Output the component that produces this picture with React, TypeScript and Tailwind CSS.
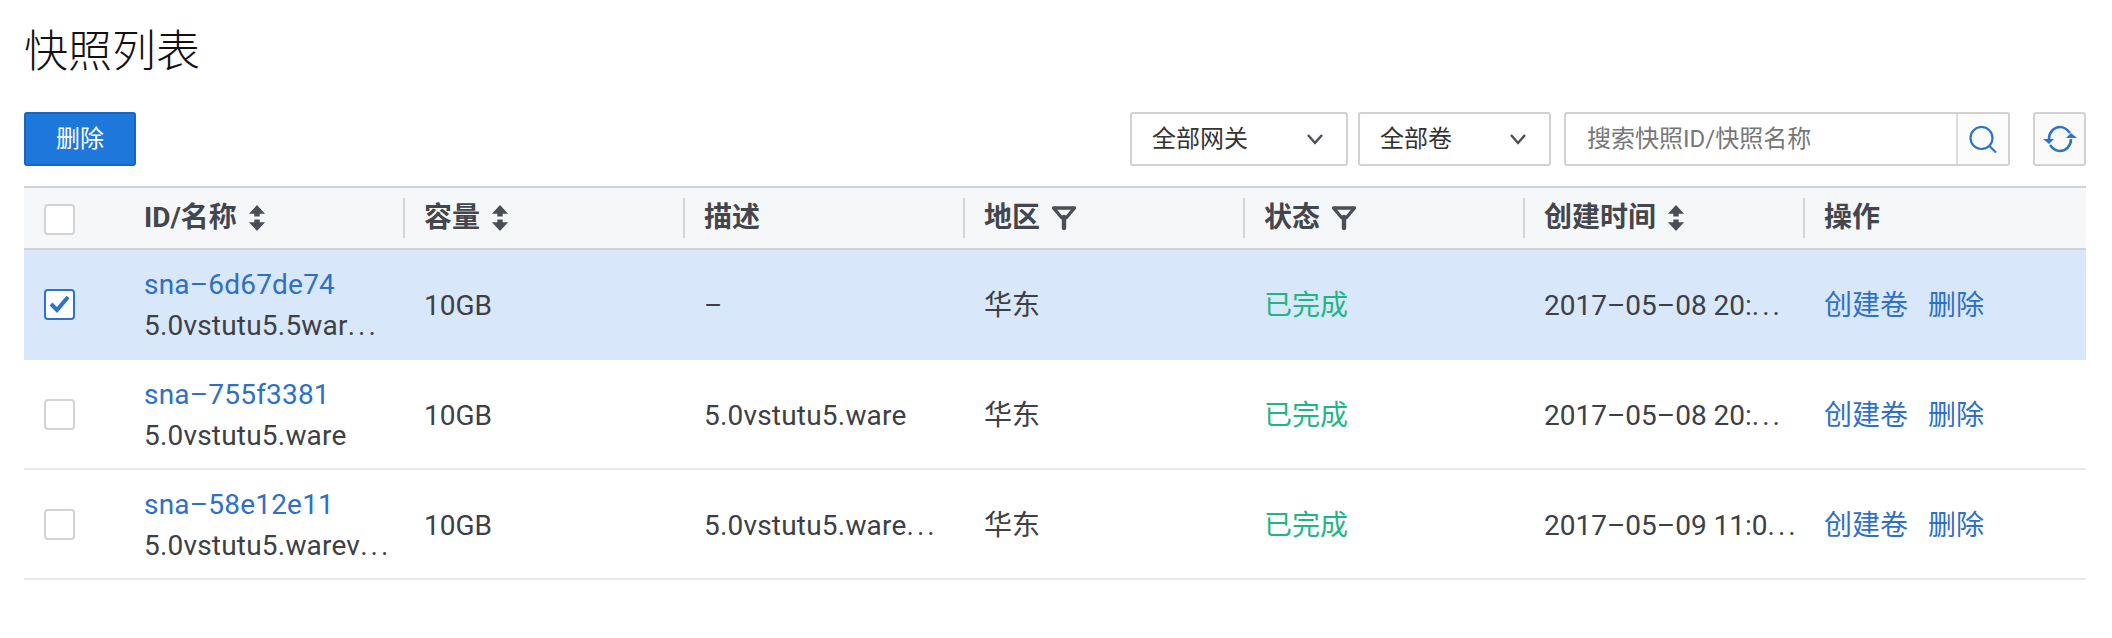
const FONT = "font-['Roboto','Noto_Sans_CJK_SC',sans-serif]";

function SortIcon() {
  return (
    <svg width="18" height="28" viewBox="0 0 16 26" className="ml-[11px] shrink-0" fill="#4a4e55">
      <path d="M8 1 L15.5 9 H10.5 V11.5 H5.5 V9 H0.5 Z" />
      <path d="M8 25 L15.5 17 H10.5 V14.5 H5.5 V17 H0.5 Z" />
    </svg>
  );
}

function FilterIcon() {
  return (
    <svg width="26" height="26" viewBox="0 0 26 26" className="ml-[11px] shrink-0" fill="none" stroke="#4a4e55">
      <path d="M2.5 3 H23.5 L15.5 12.5 H10.5 Z" strokeWidth="3.4" strokeLinejoin="round" />
      <path d="M13 12 V23" strokeWidth="4.4" strokeLinecap="round" />
    </svg>
  );
}

function Chevron() {
  return (
    <svg width="18" height="12" viewBox="0 0 18 12" fill="none" stroke="#4a4e55" strokeWidth="2.4">
      <path d="M2 2 L9 10 L16 2" />
    </svg>
  );
}

function Checkbox({ checked }: { checked?: boolean }) {
  return (
    <div className={`flex h-[31px] w-[31px] items-center justify-center rounded-[4px] border-2 bg-white ${checked ? "border-[#2c74c9]" : "border-[#d3d3d3]"}`}>
      {checked && (
        <svg width="22" height="20" viewBox="0 0 22 20" fill="none" stroke="#2c74c9" strokeWidth="4">
          <path d="M2 10 L8 16 L19 3" />
        </svg>
      )}
    </div>
  );
}

function Select({ label, width }: { label: string; width: string }) {
  return (
    <div className={`flex h-[54px] items-center justify-between rounded-[3px] border-2 border-[#d2d2d2] bg-white pl-[20px] pr-[22px] text-[24px] text-[#333] ${width}`}>
      <span>{label}</span>
      <Chevron />
    </div>
  );
}

const headers: { label: string; icon?: "sort" | "filter" }[] = [
  { label: "ID/名称", icon: "sort" },
  { label: "容量", icon: "sort" },
  { label: "描述" },
  { label: "地区", icon: "filter" },
  { label: "状态", icon: "filter" },
  { label: "创建时间", icon: "sort" },
  { label: "操作" },
];

const rows = [
  { id: "sna–6d67de74", name: "5.0vstutu5.5war", nameCut: true, desc: "–", descCut: false, time: "2017–05–08 20:", checked: true },
  { id: "sna–755f3381", name: "5.0vstutu5.ware", nameCut: false, desc: "5.0vstutu5.ware", descCut: false, time: "2017–05–08 20:", checked: false },
  { id: "sna–58e12e11", name: "5.0vstutu5.warev", nameCut: true, desc: "5.0vstutu5.ware", descCut: true, time: "2017–05–09 11:0", checked: false },
];

function Dots() {
  return <span className="tracking-[3px]">...</span>;
}

const GRID = "grid grid-cols-[99px_280px_280px_280px_280px_280px_280px_283px]";

export default function App() {
  return (
    <div className={`h-[638px] w-[2112px] bg-white pl-[24px] pr-[26px] ${FONT}`}>
      <h1 className="pt-[24px] text-[44px] leading-[56px] font-light text-[#111]">快照列表</h1>

      <div className="mt-[32px] flex items-center justify-between">
        <button className="flex h-[54px] w-[112px] items-center justify-center rounded-[3px] border-2 border-[#1766c2] bg-[#1e78dc] text-[24px] text-white">
          删除
        </button>
        <div className="flex items-center">
          <Select label="全部网关" width="w-[218px]" />
          <div className="w-[10px]" />
          <Select label="全部卷" width="w-[193px]" />
          <div className="w-[13px]" />
          <div className="flex h-[54px] w-[446px] items-center rounded-[3px] border-2 border-[#d2d2d2] bg-white">
            <div className="flex-1 pl-[21px] text-[24px] text-[#777]">搜索快照ID/快照名称</div>
            <div className="flex h-full w-[52px] items-center justify-center border-l-2 border-[#dcdcdc] bg-[#fcfcfc]">
              <svg width="28" height="27" viewBox="0 0 28 27" fill="none" stroke="#2c74c9" strokeWidth="2.2">
                <circle cx="12.5" cy="12" r="11" />
                <path d="M20.5 20 L27 26.5" />
              </svg>
            </div>
          </div>
          <div className="w-[23px]" />
          <div className="flex h-[54px] w-[53px] items-center justify-center rounded-[3px] border-2 border-[#d2d2d2] bg-[#fafafa]">
            <svg width="34" height="30" viewBox="0 0 34 30" fill="none" stroke="#2c74c9" strokeWidth="2.6">
              <path d="M6 15 C6 8 11 3 17 3 C21 3 24 5 27 9" />
              <path d="M28 15 C28 22 23 27 17 27 C13 27 10 25 7 21" />
              <path d="M0 15 H11 L6 20 Z" fill="#2c74c9" stroke="none" />
              <path d="M23 14 H34 L28 9 Z" fill="#2c74c9" stroke="none" />
            </svg>
          </div>
        </div>
      </div>

      <div className="mt-[20px]">
        <div className={`${GRID} h-[64px] border-y-2 border-y-[#d0d4da] bg-[#f6f7f9]`}>
          <div className="flex items-center pl-[20px] pt-[3px]">
            <Checkbox />
          </div>
          {headers.map((h, i) => (
            <div key={h.label} className="flex items-center">
              <div className={`flex h-[40px] w-full items-center text-[28px] font-bold text-[#43464c] ${i > 0 ? "border-l-2 border-[#d3d5d9] pl-[19px]" : "pl-[21px]"}`}>
                {h.label}
                {h.icon === "sort" && <SortIcon />}
                {h.icon === "filter" && <FilterIcon />}
              </div>
            </div>
          ))}
        </div>

        {rows.map((r) => (
          <div
            key={r.id}
            className={`${GRID} h-[110px] items-center border-b-2 text-[28px] leading-[41px] text-[#3d4045] ${r.checked ? "border-b-[#d8e7fa] bg-[#d8e7fa]" : "border-b-[#e6e8ea] bg-white"}`}
          >
            <div className="pl-[20px]">
              <Checkbox checked={r.checked} />
            </div>
            <div className="whitespace-nowrap pl-[21px] pt-[2px] tracking-[0.2px]">
              <div className="text-[#2e6fc8]">{r.id}</div>
              <div>
                {r.name}
                {r.nameCut && <Dots />}
              </div>
            </div>
            <div className="pl-[21px] pt-[2px]">10GB</div>
            <div className="whitespace-nowrap pl-[21px] pt-[2px] tracking-[0.2px]">
              {r.desc}
              {r.descCut && <Dots />}
            </div>
            <div className="pl-[21px] pt-[2px]">华东</div>
            <div className="pl-[21px] pt-[2px] text-[#1fb584]">已完成</div>
            <div className="whitespace-nowrap pl-[21px] pt-[2px]">
              {r.time}
              <Dots />
            </div>
            <div className="flex gap-[20px] whitespace-nowrap pl-[21px] pt-[2px] text-[#2e6fc8]">
              <span>创建卷</span>
              <span>删除</span>
            </div>
          </div>
        ))}
      </div>
    </div>
  );
}
